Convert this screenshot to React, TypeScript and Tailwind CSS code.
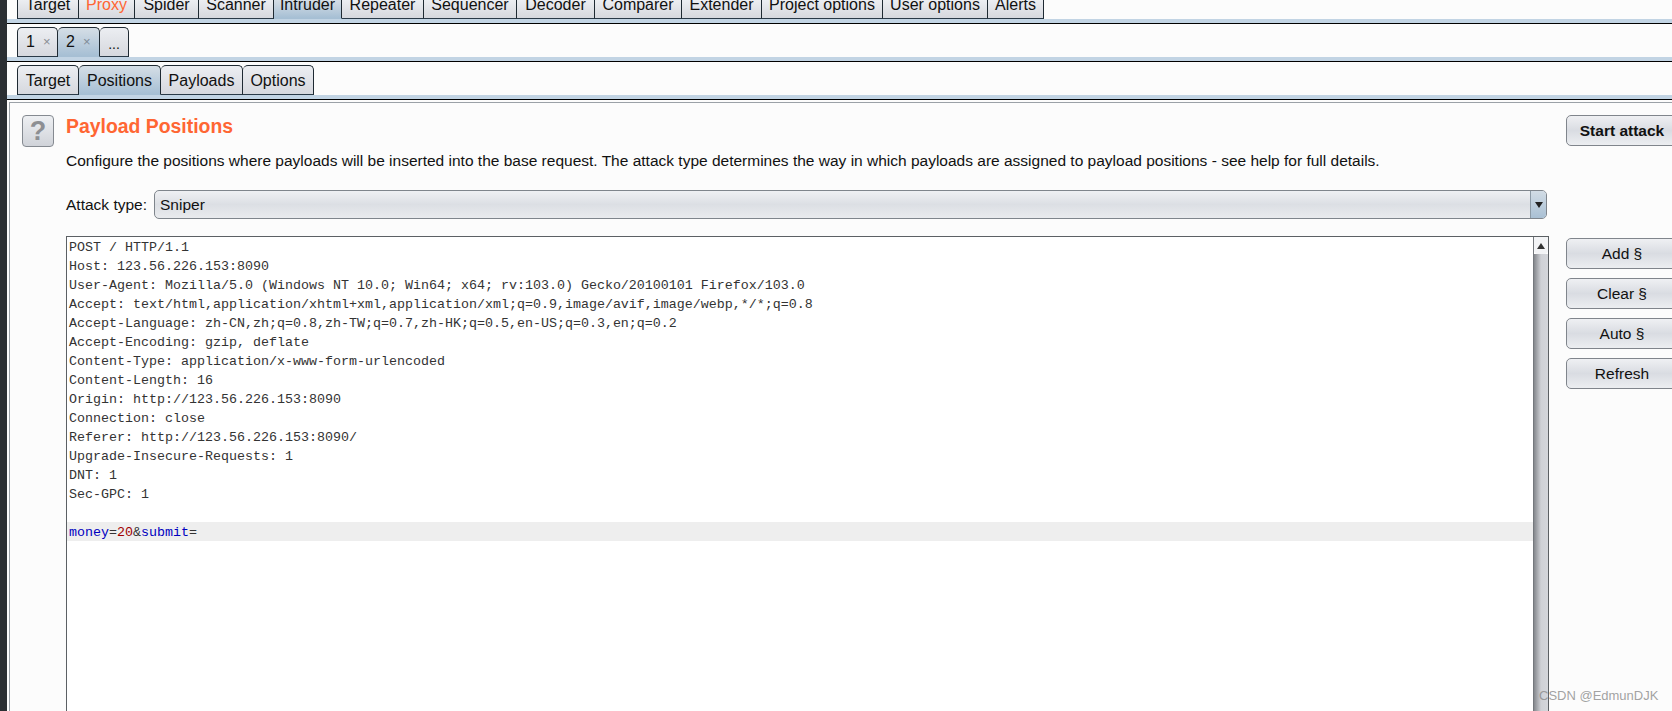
import React from 'react'

const topTabs = [
  { label: 'Target', width: 'w-[62px]' },
  { label: 'Proxy', width: 'w-[56px]', proxy: true },
  { label: 'Spider', width: 'w-[64px]' },
  { label: 'Scanner', width: 'w-[75px]' },
  { label: 'Intruder', width: 'w-[68px]', active: true },
  { label: 'Repeater', width: 'w-[82px]' },
  { label: 'Sequencer', width: 'w-[93px]' },
  { label: 'Decoder', width: 'w-[78px]' },
  { label: 'Comparer', width: 'w-[87px]' },
  { label: 'Extender', width: 'w-[80px]' },
  { label: 'Project options', width: 'w-[121px]' },
  { label: 'User options', width: 'w-[105px]' },
  { label: 'Alerts', width: 'w-[56px]' },
]

const subTabs = [
  { label: 'Target', width: 'w-[62px]' },
  { label: 'Positions', width: 'w-[82px]', active: true },
  { label: 'Payloads', width: 'w-[82px]' },
  { label: 'Options', width: 'w-[71px]' },
]

const requestLines = [
  'POST / HTTP/1.1',
  'Host: 123.56.226.153:8090',
  'User-Agent: Mozilla/5.0 (Windows NT 10.0; Win64; x64; rv:103.0) Gecko/20100101 Firefox/103.0',
  'Accept: text/html,application/xhtml+xml,application/xml;q=0.9,image/avif,image/webp,*/*;q=0.8',
  'Accept-Language: zh-CN,zh;q=0.8,zh-TW;q=0.7,zh-HK;q=0.5,en-US;q=0.3,en;q=0.2',
  'Accept-Encoding: gzip, deflate',
  'Content-Type: application/x-www-form-urlencoded',
  'Content-Length: 16',
  'Origin: http://123.56.226.153:8090',
  'Connection: close',
  'Referer: http://123.56.226.153:8090/',
  'Upgrade-Insecure-Requests: 1',
  'DNT: 1',
  'Sec-GPC: 1',
]

const tabBase = 'flex shrink-0 rounded-t-[5px] border border-l-0 first:border-l border-[#1f2a33]'
const tabIdle = 'bg-gradient-to-b from-[#eceef2] to-[#d6d8de] border-b-[#2a3a48]'
const tabActive = 'bg-gradient-to-b from-[#d5dee6] to-[#a6bfd4] border-b-[#a6bfd4]'

const Divider = () => (
  <div className="h-[4px] shrink-0 border-b border-black bg-[#c2d4e4] box-content" />
)

const SideButton = ({ label, bold }: { label: string; bold?: boolean }) => (
  <button className={`h-[31px] w-[112px] rounded-[5px] border border-[#80858c] bg-gradient-to-b from-[#eff0f3] via-[#d9dce2] to-[#eceef1] text-[15.5px] text-[#111] ${bold ? 'font-bold' : ''}`}>
    {label}
  </button>
)

export default function App() {
  return (
    <div className="flex h-[711px] w-[1672px] overflow-hidden bg-[#fcfcfc] font-['Liberation_Sans',sans-serif] text-[16px] text-[#111]">
      <div className="w-[7px] shrink-0 bg-[#2b2f33]" />

      <div className="flex min-w-0 flex-1 flex-col">
        {/* Main tool tabs, cut off by the top of the capture */}
        <div className="flex h-[19px] shrink-0 pl-[10px]">
          {topTabs.map((tab) => (
            <div
              key={tab.label}
              className={`flex shrink-0 justify-center border-r border-b border-[#1f2a33] first:border-l h-[19px] leading-[10px] ${tab.width} ${tab.active ? tabActive : tabIdle} ${tab.proxy ? 'text-[#ff6633]' : ''}`}
            >
              {tab.label}
            </div>
          ))}
        </div>
        <Divider />

        {/* Attack tabs */}
        <div className="flex h-[33px] shrink-0 items-end pl-[10px]">
          <div className={`${tabBase} ${tabIdle} h-[30px] w-[41px] items-center pl-[8px]`}>
            <span>1</span>
            <span className="ml-[8px] text-[13px] text-[#8a8d92]">×</span>
          </div>
          <div className={`${tabBase} ${tabActive} h-[30px] w-[42px] items-center pl-[8px]`}>
            <span>2</span>
            <span className="ml-[8px] text-[13px] text-[#7f8b96]">×</span>
          </div>
          <div className={`${tabBase} ${tabIdle} h-[30px] w-[29px] items-center justify-center pt-[4px] text-[14px]`}>...</div>
        </div>
        <Divider />

        {/* Intruder sub tabs */}
        <div className="flex h-[33px] shrink-0 items-end pl-[10px]">
          {subTabs.map((tab) => (
            <div key={tab.label} className={`${tabBase} ${tab.width} h-[30px] items-center justify-center pt-[1px] ${tab.active ? tabActive : tabIdle}`}>
              {tab.label}
            </div>
          ))}
        </div>
        <Divider />

        <div className="mt-[2px] ml-[2px] flex flex-1 border-t border-l border-[#9ba1a7] pt-[12px] pl-[12px]">
          <button className="flex h-[32px] w-[32px] shrink-0 items-center justify-center rounded-[4px] border border-[#858a91] bg-gradient-to-b from-[#eef0f3] to-[#d0d3d9] text-[27px] font-bold text-[#8d8f93]">
            ?
          </button>

          <div className="ml-[12px] flex w-[1483px] shrink-0 flex-col">
            <h1 className="h-[24px] text-[19.4px] leading-[22px] font-bold text-[#ff6633]">Payload Positions</h1>
            <p className="mt-[11px] h-[22px] text-[15.5px] leading-[22px] whitespace-nowrap">
              Configure the positions where payloads will be inserted into the base request. The attack type determines the way in which payloads are assigned to payload positions - see help for full details.
            </p>

            <div className="mt-[18px] flex h-[29px] items-center text-[15.5px]">
              <span className="w-[88px] shrink-0">Attack type:</span>
              <div className="flex h-[29px] w-[1393px] items-stretch overflow-hidden rounded-[5px] border border-[#7f858c] bg-gradient-to-b from-[#eff0f3] via-[#dcdfe4] to-[#e9ebee]">
                <span className="flex-1 pl-[5px] leading-[27px]">Sniper</span>
                <span className="flex w-[16px] items-center justify-center border-l border-[#8c9aa6] bg-gradient-to-b from-[#d2dce5] to-[#a9c0d4]">
                  <svg width="8" height="6" viewBox="0 0 8 6"><path d="M0 0h8L4 6z" fill="#222" /></svg>
                </span>
              </div>
            </div>

            <div className="mt-[17px] flex h-[490px] shrink-0 border border-[#5c6064] bg-white">
              <div className="min-w-0 flex-1 font-['Liberation_Mono',monospace] text-[13.33px] leading-[21px] text-[#333]">
                {requestLines.map((line) => (
                  <div key={line} className="h-[19px] pl-[2px] whitespace-pre">{line}</div>
                ))}
                <div className="h-[19px]" />
                <div className="h-[19px] bg-[#eeeeee] pl-[2px] whitespace-pre">
                  <span className="text-[#0000c0]">money</span>=<span className="text-[#a00000]">20</span>&amp;<span className="text-[#0000c0]">submit</span>=
                </div>
              </div>

              <div className="flex w-[15px] shrink-0 flex-col border-l border-[#74787d]">
                <div className="flex h-[17px] items-center justify-center rounded-b-[4px] bg-[#f3f4f6]">
                  <svg width="8" height="6" viewBox="0 0 8 6"><path d="M0 6h8L4 0z" fill="#333" /></svg>
                </div>
                <div className="flex-1 bg-gradient-to-r from-[#85888d] via-[#cfd1d6] to-[#d4d6db]" />
              </div>
            </div>
          </div>

          <div className="ml-[17px] flex w-[112px] shrink-0 flex-col">
            <SideButton label="Start attack" bold />
            <div className="mt-[92px] flex flex-col gap-[9px]">
              <SideButton label="Add §" />
              <SideButton label="Clear §" />
              <SideButton label="Auto §" />
              <SideButton label="Refresh" />
            </div>
          </div>
        </div>
      </div>

      {/* CSDN watermark sits over the screenshot */}
      <span className="absolute top-[687px] left-[1539px] text-[13px] leading-[18px] whitespace-nowrap text-[#8a8a8a]/80">CSDN @EdmunDJK</span>
    </div>
  )
}
